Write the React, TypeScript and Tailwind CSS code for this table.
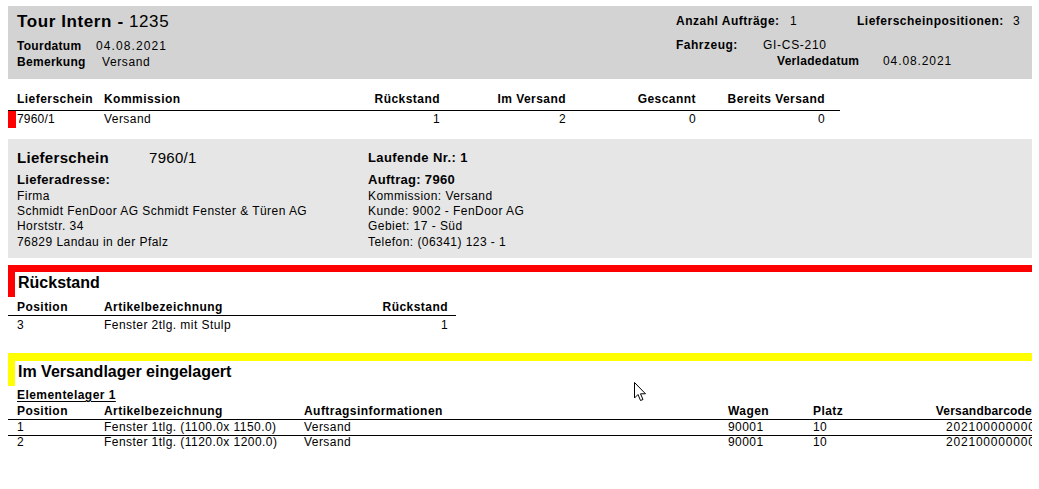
const rueckstandRows = [{ pos: "3", artikel: "Fenster 2tlg. mit Stulp", rueckstand: "1" }];

const lagerRows = [
  { pos: "1", artikel: "Fenster 1tlg. (1100.0x 1150.0)", info: "Versand", wagen: "90001", platz: "10", barcode: "20210000000001" },
  { pos: "2", artikel: "Fenster 1tlg. (1120.0x 1200.0)", info: "Versand", wagen: "90001", platz: "10", barcode: "20210000000002" },
];

function Cursor() {
  return (
    <svg className="absolute left-[634px] top-[382px]" width="13" height="20" viewBox="0 0 13 20">
      <path
        d="M0.5 0.5 L0.5 16 L4 12.5 L6.5 18.5 L9 17.5 L6.5 11.8 L11.5 11.8 Z"
        fill="#fff"
        stroke="#000"
        strokeWidth="1"
        strokeLinejoin="miter"
      />
    </svg>
  );
}

function TourHeader() {
  return (
    <div className="flex h-[73px] w-[1024px] bg-[#d3d3d3] pl-[9px] pt-[6px]">
      <div className="flex w-[659px] flex-col">
        <div className="h-[20px] text-[17px] leading-[20px] tracking-[0.6px]">
          <span className="font-bold">Tour Intern - </span>
          <span>1235</span>
        </div>
        <div className="mt-[6px] flex h-[16px] text-[12px] leading-[17px]">
          <span className="w-[79px] font-bold tracking-[0.3px]">Tourdatum</span>
          <span className="tracking-[1.1px]">04.08.2021</span>
        </div>
        <div className="flex h-[16px] text-[12px] leading-[16px]">
          <span className="w-[85px] font-bold tracking-[0.3px]">Bemerkung</span>
          <span className="tracking-[0.6px]">Versand</span>
        </div>
      </div>
      <div className="flex flex-col pt-[1px] text-[12px] leading-[16px]">
        <div className="flex h-[16px]">
          <span className="w-[114px] font-bold tracking-[0.5px]">Anzahl Aufträge:</span>
          <span className="w-[67px]">1</span>
          <span className="w-[156px] font-bold tracking-[0.5px]">Lieferscheinpositionen:</span>
          <span>3</span>
        </div>
        <div className="mt-[8px] flex h-[16px]">
          <span className="w-[87px] font-bold tracking-[0.5px]">Fahrzeug:</span>
          <span className="tracking-[0.7px]">GI-CS-210</span>
        </div>
        <div className="ml-[101px] flex h-[16px]">
          <span className="w-[106px] font-bold tracking-[0.3px]">Verladedatum</span>
          <span className="tracking-[0.9px]">04.08.2021</span>
        </div>
      </div>
    </div>
  );
}

function TourTable() {
  const cols = "grid grid-cols-[96px_256px_80px_126px_130px_129px_15px]";
  return (
    <div className="mt-[11px] w-[832px] text-[12px] leading-[16px] tracking-[0.45px]">
      <div className={`${cols} h-[21px] border-b border-black pt-[1px] font-bold`}>
        <span className="pl-[9px]">Lieferschein</span>
        <span>Kommission</span>
        <span className="text-right">Rückstand</span>
        <span className="text-right">Im Versand</span>
        <span className="text-right">Gescannt</span>
        <span className="text-right">Bereits Versand</span>
        <span />
      </div>
      <div className={`${cols} h-[17px]`}>
        <div className="flex">
          <span className="h-[17px] w-[8px] bg-[#ff0000]" />
          <span className="pl-[1px] tracking-[0.2px]">7960/1</span>
        </div>
        <span>Versand</span>
        <span className="text-right">1</span>
        <span className="text-right">2</span>
        <span className="text-right">0</span>
        <span className="text-right">0</span>
        <span />
      </div>
    </div>
  );
}

function LieferscheinBox() {
  return (
    <div className="mt-[11px] flex h-[119px] w-[1024px] bg-[#e6e6e6] pl-[9px] pt-[10px] text-[12px] tracking-[0.45px]">
      <div className="flex w-[351px] flex-col">
        <div className="flex h-[18px] items-center text-[15px] leading-[18px]">
          <span className="w-[132px] font-bold tracking-[0.3px]">Lieferschein</span>
          <span className="tracking-[0.3px]">7960/1</span>
        </div>
        <div className="mt-[5px] h-[16px] text-[13px] font-bold leading-[16px] tracking-[0.3px]">Lieferadresse:</div>
        <div className="pt-[1px] leading-[15.2px]">
          <div>Firma</div>
          <div>Schmidt FenDoor AG Schmidt Fenster &amp; Türen AG</div>
          <div>Horststr. 34</div>
          <div>76829 Landau in der Pfalz</div>
        </div>
      </div>
      <div className="flex flex-col">
        <div className="flex h-[18px] items-center text-[13px] font-bold leading-[18px] tracking-[0.4px]">Laufende Nr.: 1</div>
        <div className="mt-[5px] h-[16px] text-[13px] font-bold leading-[16px] tracking-[0.3px]">Auftrag: 7960</div>
        <div className="pt-[1px] leading-[15.2px]">
          <div>Kommission: Versand</div>
          <div>Kunde: 9002 - FenDoor AG</div>
          <div>Gebiet: 17 - Süd</div>
          <div>Telefon: (06341) 123 - 1</div>
        </div>
      </div>
    </div>
  );
}

function SectionHeading({ title, color, size }: { title: string; color: string; size: string }) {
  return (
    <div className={`w-[1024px] border-l-[7px] ${size} ${color} pl-[3px] pt-[1px] text-[16px] font-bold leading-[20px]`}>
      {title}
    </div>
  );
}

function RueckstandSection() {
  const cols = "grid grid-cols-[96px_260px_92px]";
  return (
    <div className="mt-[7px]">
      <SectionHeading title="Rückstand" color="border-[#ff0000]" size="h-[32px] border-t-[7px]" />
      <div className="w-[448px] text-[12px] leading-[16px] tracking-[0.45px]">
        <div className={`${cols} h-[19px] border-b border-black pt-[2px] font-bold`}>
          <span className="pl-[9px]">Position</span>
          <span>Artikelbezeichnung</span>
          <span className="pr-[8px] text-right">Rückstand</span>
        </div>
        {rueckstandRows.map((r) => (
          <div key={r.pos} className={`${cols} h-[17px] pt-[1px]`}>
            <span className="pl-[9px]">{r.pos}</span>
            <span>{r.artikel}</span>
            <span className="pr-[8px] text-right">{r.rueckstand}</span>
          </div>
        ))}
      </div>
    </div>
  );
}

function VersandlagerSection() {
  const cols = "grid grid-cols-[96px_200px_424px_85px_114px_105px]";
  return (
    <div className="mt-[20px]">
      <SectionHeading title="Im Versandlager eingelagert" color="border-[#ffff00]" size="h-[33px] border-t-[8px]" />
      <div className="w-[1024px] text-[12px] leading-[16px] tracking-[0.45px]">
        <div className="h-[17px] pl-[9px] pt-[1px] font-bold underline underline-offset-[2px]">Elementelager 1</div>
        <div className={`${cols} h-[17px] border-b border-black font-bold`}>
          <span className="pl-[9px]">Position</span>
          <span>Artikelbezeichnung</span>
          <span>Auftragsinformationen</span>
          <span>Wagen</span>
          <span>Platz</span>
          <span className="whitespace-nowrap text-right tracking-[0.2px]">Versandbarcode</span>
        </div>
        {lagerRows.map((r, i) => (
          <div
            key={r.pos}
            className={`${cols} h-[16px] ${i === 0 ? "border-b border-black leading-[15px]" : "leading-[12px]"}`}
          >
            <span className="pl-[9px]">{r.pos}</span>
            <span className="whitespace-nowrap">{r.artikel}</span>
            <span>{r.info}</span>
            <span>{r.wagen}</span>
            <span>{r.platz}</span>
            <span className="overflow-hidden whitespace-nowrap pl-[19px] tracking-[0.8px]">{r.barcode}</span>
          </div>
        ))}
      </div>
    </div>
  );
}

export default function App() {
  return (
    <div className="relative h-[489px] w-[1039px] overflow-hidden bg-white pl-[8px] pt-[6px] font-['Liberation_Sans',Arial,sans-serif] text-black">
      <TourHeader />
      <TourTable />
      <LieferscheinBox />
      <RueckstandSection />
      <VersandlagerSection />
      <Cursor />
    </div>
  );
}
